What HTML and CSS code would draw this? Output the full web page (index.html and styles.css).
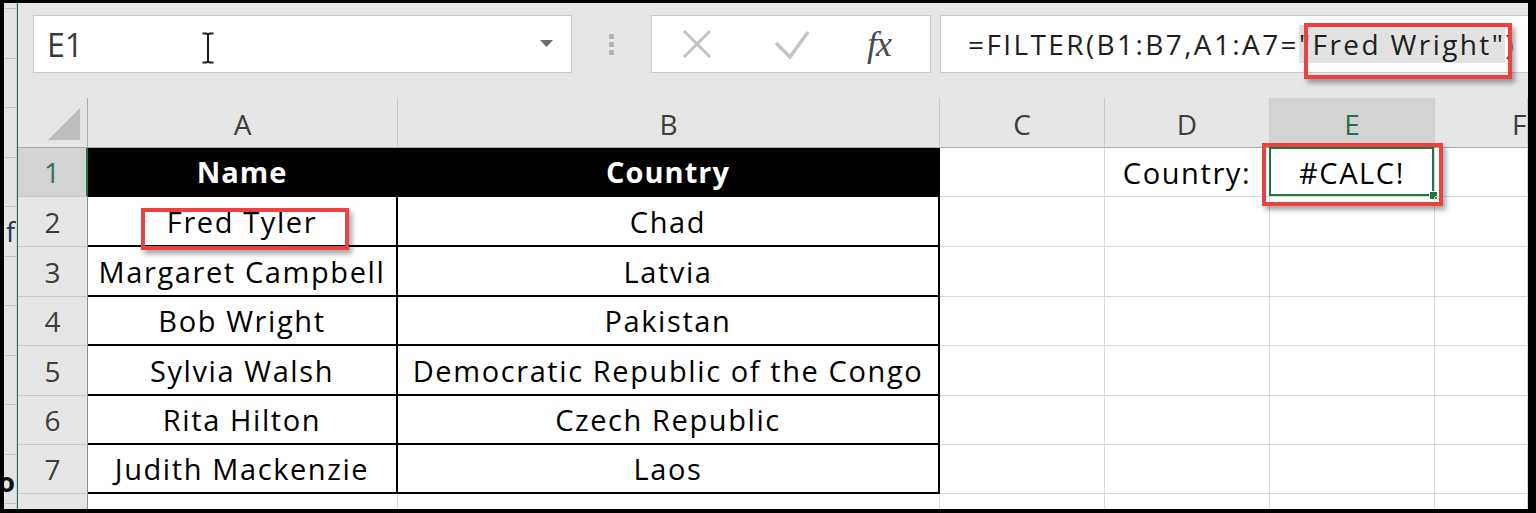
FILE: index.html
```html
<!DOCTYPE html>
<html>
<head>
<meta charset="utf-8">
<link rel="stylesheet" href="styles.css">
</head>
<body>
<div class="frame">
  <div class="leftpane">
    <div class="lp-top"></div>
    <div class="lp-row"></div>
    <div class="lp-row"></div>
    <div class="lp-row"></div>
    <div class="lp-row"></div>
    <div class="lp-row lp-f"><span>f</span></div>
    <div class="lp-row"></div>
    <div class="lp-row"></div>
    <div class="lp-row"></div>
    <div class="lp-row"></div>
    <div class="lp-row lp-o"><span>o</span></div>
  </div>
  <div class="main">
    <div class="toolbar">
      <div class="namebox">
        <span class="nb-text">E1</span>
        <svg class="ibeam" width="14" height="32" viewBox="0 0 14 32"><path d="M1.5 1.5h3.5c1.2 0 2 .8 2 2v25c0 1.2.8 2 2 2h3.5M12.5 1.5H9c-1.2 0-2 .8-2 2M1.5 30.5H5c1.2 0 2-.8 2-2" stroke="#1c1c1c" stroke-width="2" fill="none"/></svg>
        <svg class="dd" width="13" height="7" viewBox="0 0 13 7"><path d="M0 0h13L6.5 7z" fill="#6e6e6e"/></svg>
      </div>
      <div class="grip"><i></i><i></i><i></i></div>
      <div class="fxbox">
        <svg class="ic-x" width="32" height="30" viewBox="0 0 32 30"><path d="M3 2L29 28M29 2L3 28" stroke="#c2c2c2" stroke-width="3" fill="none"/></svg>
        <svg class="ic-check" width="36" height="32" viewBox="0 0 36 32"><path d="M2 15L16 29L34 4" stroke="#c4c4c4" stroke-width="3.5" fill="none"/></svg>
        <span class="fx">fx</span>
      </div>
      <div class="formula">
        <span class="ftext">=FILTER(B1:B7,A1:A7=<span class="hl">"Fred Wright"</span>)</span>
        <div class="anno anno-formula"></div>
      </div>
    </div>
    <div class="sheet">
      <div class="corner"><svg width="32" height="32" viewBox="0 0 32 32"><path d="M32 0V32H0z" fill="#bdbdbd"/></svg></div>
      <div class="ch">A</div>
      <div class="ch">B</div>
      <div class="ch">C</div>
      <div class="ch">D</div>
      <div class="ch sel-col">E</div>
      <div class="ch ch-f">F</div>

      <div class="rh sel-row">1</div>
      <div class="c t th">Name</div>
      <div class="c t th">Country</div>
      <div class="c"></div>
      <div class="c">Country:</div>
      <div class="c sel-cell">#CALC!<div class="anno anno-e1"></div></div>
      <div class="c"></div>

      <div class="rh">2</div>
      <div class="c t">Fred Tyler<div class="anno anno-name"></div></div>
      <div class="c t">Chad</div>
      <div class="c"></div><div class="c"></div><div class="c"></div><div class="c"></div>

      <div class="rh">3</div>
      <div class="c t">Margaret Campbell</div>
      <div class="c t">Latvia</div>
      <div class="c"></div><div class="c"></div><div class="c"></div><div class="c"></div>

      <div class="rh">4</div>
      <div class="c t">Bob Wright</div>
      <div class="c t">Pakistan</div>
      <div class="c"></div><div class="c"></div><div class="c"></div><div class="c"></div>

      <div class="rh">5</div>
      <div class="c t">Sylvia Walsh</div>
      <div class="c t">Democratic Republic of the Congo</div>
      <div class="c"></div><div class="c"></div><div class="c"></div><div class="c"></div>

      <div class="rh">6</div>
      <div class="c t">Rita Hilton</div>
      <div class="c t">Czech Republic</div>
      <div class="c"></div><div class="c"></div><div class="c"></div><div class="c"></div>

      <div class="rh">7</div>
      <div class="c t">Judith Mackenzie</div>
      <div class="c t">Laos</div>
      <div class="c"></div><div class="c"></div><div class="c"></div><div class="c"></div>

      <div class="rh rh-last">8</div>
      <div class="c"></div><div class="c"></div><div class="c"></div><div class="c"></div><div class="c"></div><div class="c"></div>
    </div>
  </div>
</div>
</body>
</html>
```

FILE: styles.css
```css
* { box-sizing: border-box; }
html, body { margin: 0; padding: 0; }
body {
  background: #000;
  width: 1536px;
  height: 513px;
  overflow: hidden;
  font-family: "Open Sans", Lato, sans-serif;
}
.frame {
  display: flex;
  margin: 3px 8px 4px 4px;
  height: 506px;
  overflow: hidden;
  background: #e6e6e6;
}
.leftpane {
  width: 13px;
  flex: none;
  background: #e4e4e4;
  border-right: 1px solid #cdcdcd;
  overflow: hidden;
}
.lp-top { height: 6px; border-bottom: 1px solid #c4c4c4; }
.lp-row {
  height: 49.5px;
  border-bottom: 1px solid #c4c4c4;
  display: flex;
  justify-content: flex-end;
  overflow: hidden;
  font-size: 27px;
  color: #23324f;
  line-height: 1;
}
.lp-f span { margin-top: 11px; margin-right: 1px; }
.lp-o span { margin-top: 13px; font-weight: bold; color: #111; margin-right: 1px; }

.main {
  flex: 1;
  min-width: 0;
  border-left: 1px solid #217346;
  display: flex;
  flex-direction: column;
  overflow: hidden;
}
.toolbar {
  height: 95px;
  flex: none;
  display: flex;
  align-items: flex-start;
  padding: 12px 0 0 15px;
}
.namebox {
  width: 539px;
  height: 58px;
  background: #fff;
  border: 1px solid #c9c9c9;
  display: flex;
  align-items: center;
  padding-left: 13px;
}
.nb-text {
  font-size: 32px;
  color: #3a3a3a;
}
.ibeam { margin-left: 118px; margin-top: 8px; }
.dd { margin-left: auto; margin-right: 18px; margin-top: -2px; }
.grip {
  width: 79px;
  height: 58px;
  display: flex;
  flex-direction: column;
  align-items: center;
  justify-content: center;
  gap: 3px;
}
.grip i { display: block; width: 5px; height: 5px; background: #b4b4b4; }
.fxbox {
  width: 280px;
  height: 58px;
  background: #fff;
  border: 1px solid #c9c9c9;
  display: flex;
  align-items: center;
  padding-left: 29px;
}
.ic-check { margin-left: 61px; }
.fx {
  margin-left: 57px;
  font-family: "Liberation Serif", serif;
  font-style: italic;
  font-size: 36px;
  color: #4a4a4a;
  letter-spacing: -1px;
}
.formula {
  flex: 1;
  margin-left: 9px;
  margin-right: -12px;
  height: 58px;
  background: #fff;
  border: 1px solid #c9c9c9;
  display: flex;
  align-items: center;
  padding-left: 27px;
  position: relative;
  white-space: nowrap;
}
.ftext { font-size: 28px; letter-spacing: 2.4px; color: #1e1e1e; }
.hl { background: #e2e2e2; }

.anno {
  position: absolute;
  border: 4px solid #ea4242;
  box-shadow: 3px 4px 5px rgba(0, 0, 0, 0.35);
  z-index: 5;
  pointer-events: none;
}
.anno-formula { left: 363px; top: 7px; width: 208px; height: 56px; }
.anno-name { left: 53px; top: 11px; width: 208px; height: 42px; }
.anno-e1 { left: -8px; top: -5px; width: 181px; height: 63px; }

.sheet {
  flex: 1;
  display: grid;
  grid-template-columns: 70px 310px 542px 165px 165px 165px 1fr;
  grid-template-rows: 50px 49px 50px 50px 49px 50px 49px 49px 1fr;
  background: #fff;
  overflow: hidden;
}
.corner {
  background: #e6e6e6;
  border-right: 1px solid #ababab;
  border-bottom: 1px solid #ababab;
  display: flex;
  align-items: flex-end;
  justify-content: flex-end;
  padding: 0 7px 7px 0;
}
.ch {
  background: #e6e6e6;
  border-right: 1px solid #c9c9c9;
  border-bottom: 1px solid #ababab;
  display: flex;
  align-items: center;
  justify-content: center;
  font-size: 28px;
  color: #3c3c3c;
  padding-top: 3px;
}
.ch-f { justify-content: flex-start; padding-left: 77px; }
.sel-col {
  background: #d3d3d3;
  color: #217346;
  border-bottom: 2px solid #217346;
}
.rh {
  background: #e6e6e6;
  border-right: 1px solid #8f8f8f;
  border-bottom: 1px solid #c9c9c9;
  display: flex;
  align-items: center;
  justify-content: center;
  font-size: 28px;
  color: #3c3c3c;
}
.rh-last { align-items: flex-start; padding-top: 8px; }
.sel-row {
  background: #d3d3d3;
  color: #3f6e55;
  border-right: 2px solid #217346;
}
.c {
  border-right: 1px solid #d9d9d9;
  border-bottom: 1px solid #d9d9d9;
  display: flex;
  align-items: center;
  justify-content: center;
  font-size: 29px;
  letter-spacing: 1.6px;
  color: #000;
  white-space: nowrap;
  position: relative;
}
.t {
  border-right: 2px solid #000;
  border-bottom: 2px solid #000;
}
.th {
  background: #000;
  color: #fff;
  font-weight: bold;
  letter-spacing: 1px;
}
.sel-cell::before {
  content: "";
  position: absolute;
  left: -1px;
  top: -1px;
  right: 0;
  bottom: 0;
  border: 2px solid #217346;
}
.sel-cell::after {
  content: "";
  position: absolute;
  right: -4px;
  bottom: -4px;
  width: 7px;
  height: 7px;
  background: #217346;
  border: 1px solid #fff;
}
```
